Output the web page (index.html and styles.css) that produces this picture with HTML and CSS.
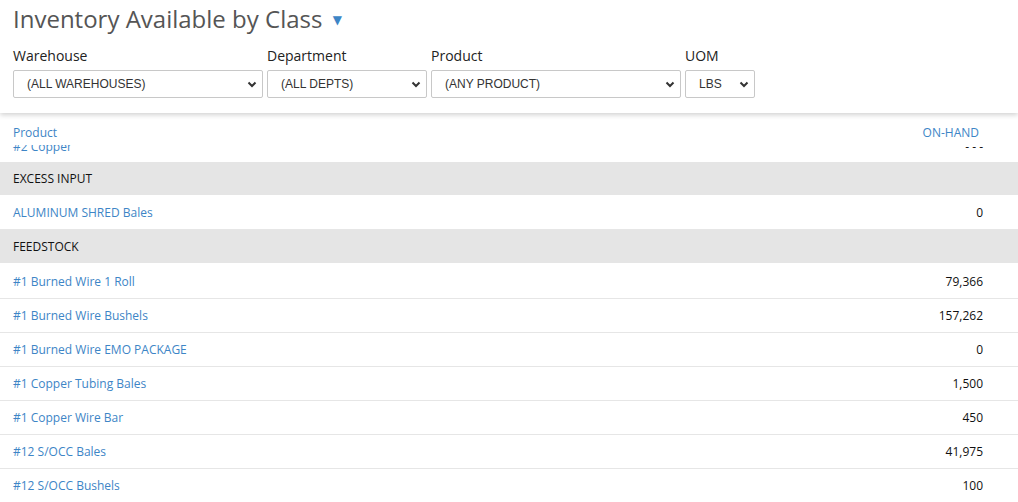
FILE: index.html
```html
<!DOCTYPE html>
<html>
<head>
<meta charset="utf-8">
<link rel="stylesheet" href="styles.css">
</head>
<body>
<div class="page">
  <header class="top">
    <h1 class="title">Inventory Available by Class <span class="caret">&#9660;</span></h1>
    <div class="filters">
      <div class="field f-wh">
        <label class="lbl">Warehouse</label>
        <div class="sel"><span class="sel-text">(ALL WAREHOUSES)</span><svg class="chev" width="10" height="7" viewBox="0 0 10 7"><path d="M1.5 1.5 L5 5 L8.5 1.5" fill="none" stroke="#333" stroke-width="2"/></svg></div>
      </div>
      <div class="field f-dept">
        <label class="lbl">Department</label>
        <div class="sel"><span class="sel-text">(ALL DEPTS)</span><svg class="chev" width="10" height="7" viewBox="0 0 10 7"><path d="M1.5 1.5 L5 5 L8.5 1.5" fill="none" stroke="#333" stroke-width="2"/></svg></div>
      </div>
      <div class="field f-prod">
        <label class="lbl">Product</label>
        <div class="sel"><span class="sel-text">(ANY PRODUCT)</span><svg class="chev" width="10" height="7" viewBox="0 0 10 7"><path d="M1.5 1.5 L5 5 L8.5 1.5" fill="none" stroke="#333" stroke-width="2"/></svg></div>
      </div>
      <div class="field f-uom">
        <label class="lbl">UOM</label>
        <div class="sel"><span class="sel-text">LBS</span><svg class="chev" width="10" height="7" viewBox="0 0 10 7"><path d="M1.5 1.5 L5 5 L8.5 1.5" fill="none" stroke="#333" stroke-width="2"/></svg></div>
      </div>
    </div>
  </header>
  <div class="grid">
    <div class="ghead">
      <span class="h-prod">Product</span>
      <span class="h-qty">ON-HAND</span>
    </div>
    <div class="gbody">
      <div class="rows">
        <div class="row cut"><span class="name">#2 Copper</span><span class="qty">- - -</span></div>
        <div class="row group"><span class="gname">EXCESS INPUT</span></div>
        <div class="row"><span class="name">ALUMINUM SHRED Bales</span><span class="qty">0</span></div>
        <div class="row group"><span class="gname">FEEDSTOCK</span></div>
        <div class="row first"><span class="name">#1 Burned Wire 1 Roll</span><span class="qty">79,366</span></div>
        <div class="row"><span class="name">#1 Burned Wire Bushels</span><span class="qty">157,262</span></div>
        <div class="row"><span class="name">#1 Burned Wire EMO PACKAGE</span><span class="qty">0</span></div>
        <div class="row"><span class="name">#1 Copper Tubing Bales</span><span class="qty">1,500</span></div>
        <div class="row"><span class="name">#1 Copper Wire Bar</span><span class="qty">450</span></div>
        <div class="row"><span class="name">#12 S/OCC Bales</span><span class="qty">41,975</span></div>
        <div class="row"><span class="name">#12 S/OCC Bushels</span><span class="qty">100</span></div>
        <div class="row"><span class="name">#2 Burned Wire Bales</span><span class="qty">0</span></div>
      </div>
    </div>
  </div>
</div>
</body>
</html>
```
FILE: styles.css
```css
html, body {
  margin: 0;
  padding: 0;
  background: #fff;
  overflow: hidden;
}
body {
  font-family: "Open Sans", "Noto Sans", sans-serif;
  width: 1018px;
  height: 502px;
}
.page {
  display: flex;
  flex-direction: column;
  height: 502px;
}
.top {
  padding: 2px 13px 0 13px;
  height: 113px;
  flex: none;
  box-sizing: border-box;
  box-shadow: 0 2px 5px rgba(0,0,0,0.18);
  position: relative;
  z-index: 2;
  background: #fff;
}
.title {
  margin: 0;
  font-size: 24px;
  font-weight: 400;
  color: #555;
  line-height: 34px;
  height: 34px;
}
.caret {
  color: #3d85c6;
  font-size: 12px;
  vertical-align: 4px;
  margin-left: 4px;
  font-family: "DejaVu Sans", sans-serif;
}
.filters {
  display: flex;
  gap: 4px;
  margin-top: 10px;
}
.field {
  display: flex;
  flex-direction: column;
}
.lbl {
  font-size: 14px;
  color: #222;
  line-height: 20px;
  height: 20px;
  margin-bottom: 4px;
}
.sel {
  position: relative;
  height: 28px;
  box-sizing: border-box;
  border: 1px solid #c8c8c8;
  border-radius: 2px;
  background: #fff;
  display: flex;
  align-items: center;
}
.sel-text {
  font-family: "Liberation Sans", Arial, sans-serif;
  font-size: 12px;
  color: #333;
  padding-left: 13px;
}
.chev {
  position: absolute;
  right: 5px;
  top: 10px;
}
.f-wh .sel { width: 250px; }
.f-dept .sel { width: 160px; }
.f-prod .sel { width: 250px; }
.f-uom .sel { width: 70px; }

.grid {
  flex: 1;
  display: flex;
  flex-direction: column;
  min-height: 0;
}
.ghead {
  display: flex;
  justify-content: space-between;
  padding: 10px 39px 0 13px;
  height: 32px;
  flex: none;
  box-sizing: border-box;
  font-size: 12px;
  line-height: 20px;
  color: #3d85c6;
}
.gbody {
  flex: 1;
  overflow: hidden;
}
.rows {
  margin-top: -17px;
}
.row {
  display: flex;
  justify-content: space-between;
  align-items: center;
  height: 34px;
  box-sizing: border-box;
  border-bottom: 1px solid #e6e6e6;
  padding: 0 35px 0 13px;
  font-size: 12px;
}
.row.cut {
  padding-top: 3px;
  border-bottom: none;
}
.row.first {
  height: 35px;
  padding-top: 1px;
}
.row.group {
  background: #e5e5e5;
  border-bottom-color: #fff;
}
.name {
  color: #3d85c6;
}
.gname {
  color: #111;
}
.qty {
  color: #111;
}
```
